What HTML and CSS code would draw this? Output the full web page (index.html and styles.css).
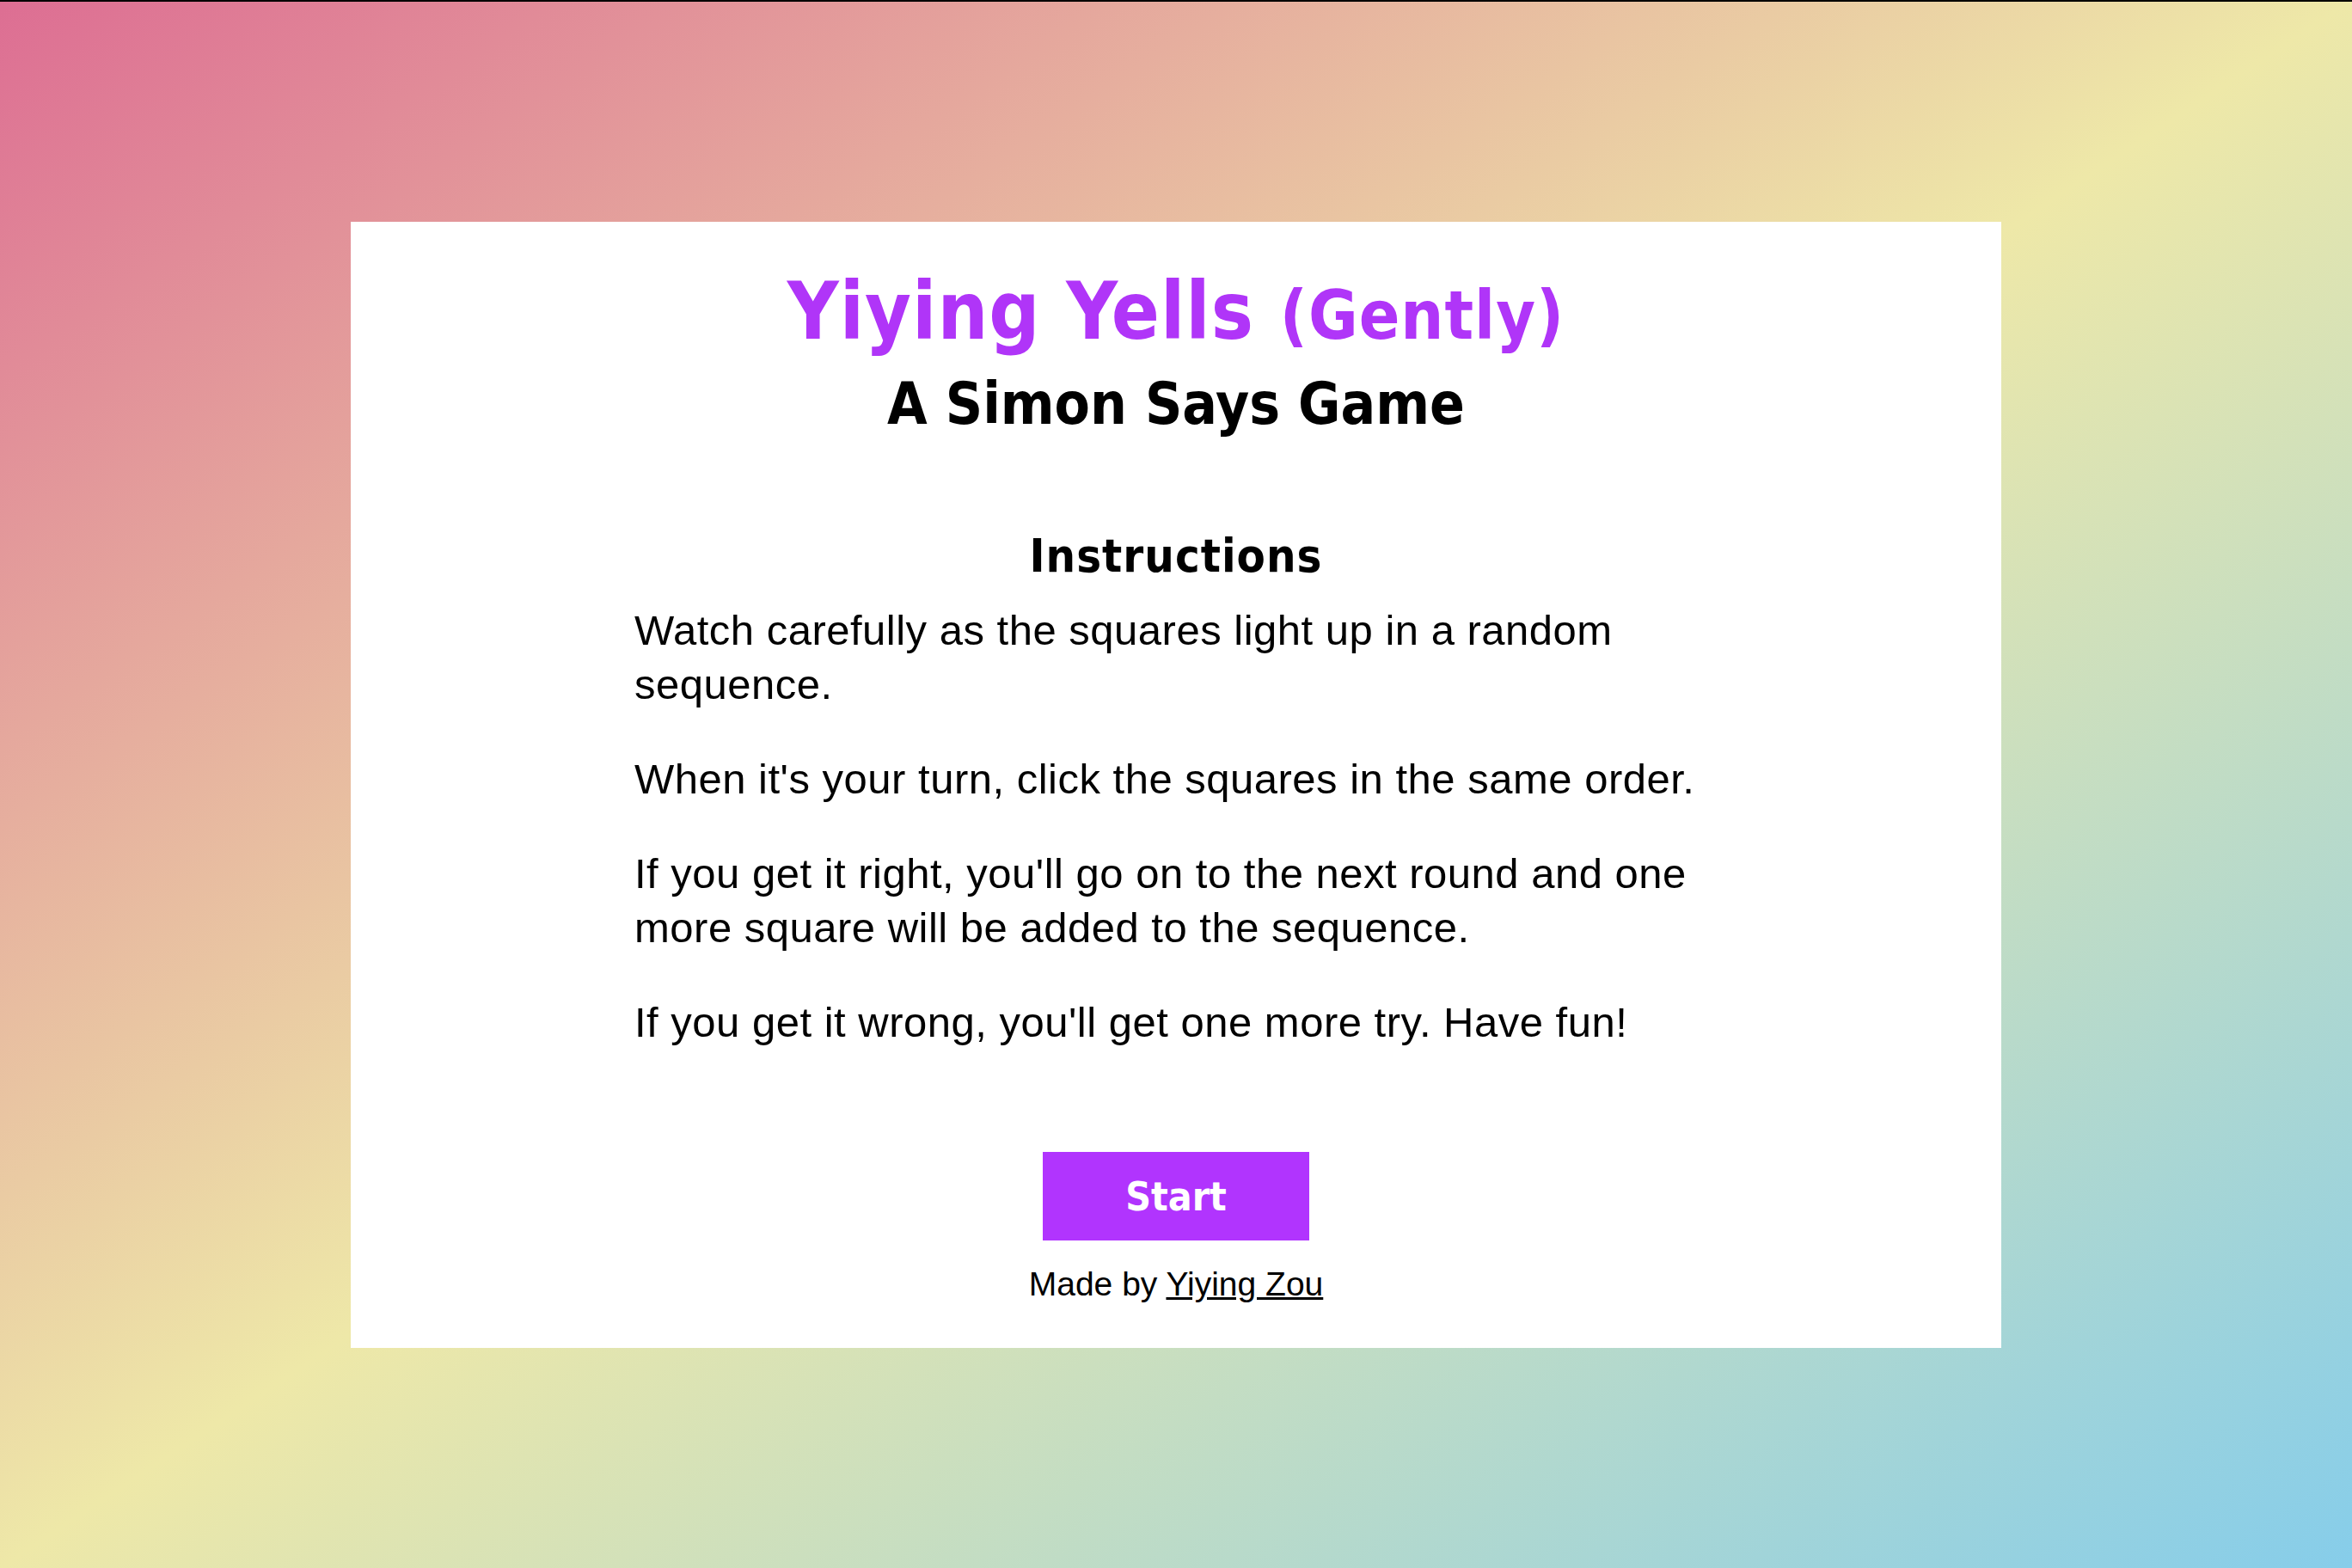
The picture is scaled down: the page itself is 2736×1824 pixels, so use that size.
FILE: index.html
```html
<!DOCTYPE html>
<html lang="en">
<head>
<meta charset="utf-8">
<title>Yiying Yells (Gently) - A Simon Says Game</title>
<link rel="stylesheet" href="styles.css">
</head>
<body>
<main class="page">
  <section class="card">
    <h1 class="title">Yiying Yells <span class="gently">(Gently)</span></h1>
    <h2 class="subtitle">A Simon Says Game</h2>
    <div class="instructions">
      <h3 class="instructions-heading">Instructions</h3>
      <p>Watch carefully as the squares light up in a random sequence.</p>
      <p>When it's your turn, click the squares in the same order.</p>
      <p>If you get it right, you'll go on to the next round and one more square will be added to the sequence.</p>
      <p>If you get it wrong, you'll get one more try. Have fun!</p>
    </div>
    <button class="start-btn" type="button">Start</button>
    <p class="credit">Made by <a href="#">Yiying Zou</a></p>
  </section>
</main>
</body>
</html>
```
FILE: styles.css
```css
html, body {
  margin: 0;
  padding: 0;
}

body {
  height: 1824px;
  box-sizing: border-box;
  border-top: 2px solid #000;
  background: linear-gradient(to bottom right, #dd6e93 0%, #eee8a8 50%, #86cdea 100%);
  font-family: "Liberation Sans", Arial, sans-serif;
  color: #000;
}

.page {
  height: 100%;
  display: flex;
  align-items: center;
  justify-content: center;
}

.card {
  width: 1920px;
  background: #fff;
  text-align: center;
  padding: 50px 0 50px;
  display: flex;
  flex-direction: column;
  align-items: center;
}

.title,
.subtitle,
.instructions-heading,
.start-btn {
  font-family: "DejaVu Sans Condensed", "Liberation Sans Narrow", "DejaVu Sans", sans-serif;
  font-stretch: condensed;
  font-weight: bold;
}

.title {
  margin: 0;
  font-size: 92px;
  line-height: 1.2;
  color: #b035f8;
  letter-spacing: 1px;
}

.gently {
  font-size: 0.85em;
}

.subtitle {
  margin: 12px 0 0;
  font-size: 67px;
  line-height: 1.2;
  letter-spacing: 0;
}

.instructions {
  width: 1260px;
  margin-top: 104px;
  text-align: left;
}

.instructions-heading {
  margin: 0;
  text-align: center;
  font-size: 54px;
  line-height: 1.2;
  letter-spacing: 1px;
}

.instructions p {
  font-size: 49px;
  line-height: 63px;
  letter-spacing: 0.5px;
  margin: 23px 0 47px;
}

.instructions p + p {
  margin-top: 0;
}

.start-btn {
  margin-top: 72px;
  width: 310px;
  height: 103px;
  border: none;
  background: #b134fe;
  color: #fff;
  font-size: 46px;
  letter-spacing: 0;
  padding: 0;
  cursor: pointer;
}

.credit {
  margin: 28px 0 0;
  font-size: 39px;
  line-height: 1.2;
}

.credit a {
  color: #000;
  text-decoration: underline;
}
```
